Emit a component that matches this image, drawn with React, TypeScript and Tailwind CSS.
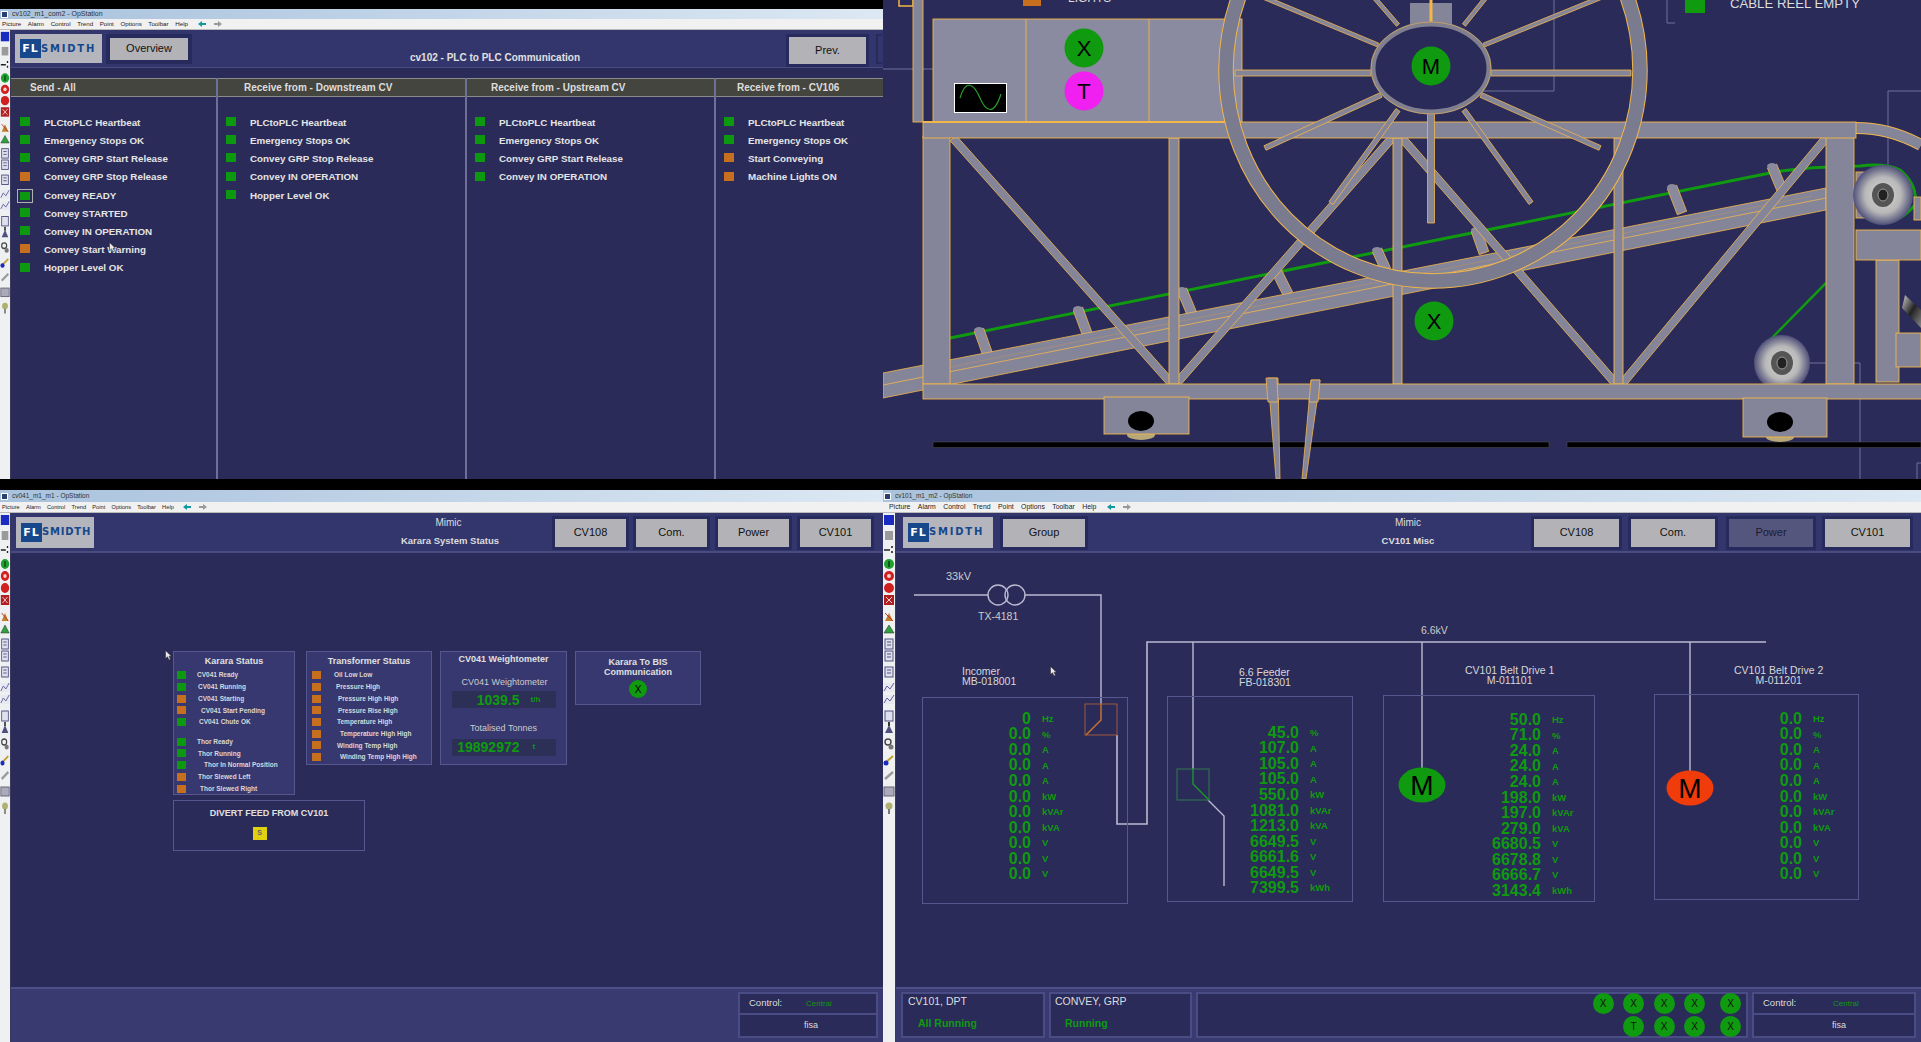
import React from "react";

const GRAY = "#85859a";
const ORG = "#f2b64a";
const GREEN = "#0f9a10";

function Bar({ a, b, w = 8, fill = GRAY }: { a: [number, number]; b: [number, number]; w?: number; fill?: string }) {
  const dx = b[0] - a[0];
  const dy = b[1] - a[1];
  const l = Math.hypot(dx, dy) || 1;
  const nx = (-dy / l) * (w / 2);
  const ny = (dx / l) * (w / 2);
  const p = `${a[0] + nx},${a[1] + ny} ${b[0] + nx},${b[1] + ny} ${b[0] - nx},${b[1] - ny} ${a[0] - nx},${a[1] - ny}`;
  return <polygon points={p} fill={fill} stroke={ORG} strokeWidth="0.8" />;
}

function Rect({ x, y, w, h, fill = GRAY }: { x: number; y: number; w: number; h: number; fill?: string }) {
  return <rect x={x} y={y} width={w} height={h} fill={fill} stroke={ORG} strokeWidth="0.9" />;
}

function Cursor({ cls }: { cls: string }) {
  return (
    <svg viewBox="0 0 7 11" className={`absolute w-[7px] h-[11px] ${cls}`}>
      <path d="M0.5 0.5V8.5L2.5 6.8L4 10L5.5 9.3L4 6.2H6.5Z" fill="#e8e8e8" stroke="#222" strokeWidth=".5" />
    </svg>
  );
}

function Toolbar({ h, wide }: { h: "tall" | "short"; wide?: boolean }) {
  return (
    <div className={`shrink-0 bg-[#eef0f2] border-r border-[#3a3a60] ${wide ? "w-[13px]" : "w-[11px]"}`}>
      <svg viewBox="0 0 12 310" preserveAspectRatio="none" className={h === "tall" ? "w-full h-[310px]" : "w-full h-[292px]"}>
        <rect x="1" y="2" width="10" height="10" fill="#1a2bc0" />
        <rect x="2" y="18" width="8" height="9" fill="#9a9a9a" />
        <path d="M1 37h6M9 33v2M9 38v2" stroke="#222" strokeWidth="1.6" />
        <circle cx="6" cy="51" r="5" fill="#20a030" /><rect x="5" y="48" width="2" height="6" fill="#0b5a12" />
        <circle cx="6" cy="63" r="5" fill="#d02020" /><circle cx="6" cy="63" r="2" fill="#f5d0d0" />
        <circle cx="6" cy="75" r="5" fill="#d02020" />
        <rect x="1" y="82" width="10" height="10" fill="#b02020" /><path d="M3 84l6 6M9 84l-6 6" stroke="#f0d0d0" />
        <path d="M2 108l4-8 4 8z" fill="#c08030" /><path d="M2 100l8 8" stroke="#c03020" />
        <path d="M1 120l5-8 5 8z" fill="#30a040" stroke="#222" strokeWidth=".5" />
        {[126, 138, 154].map((y) => (
          <g key={y}>
            <rect x="2" y={y} width="8" height="10" fill="#dfe0ee" stroke="#505080" />
            <path d={`M4 ${y + 3}h4M4 ${y + 6}h4`} stroke="#505080" />
          </g>
        ))}
        {[170, 182].map((y) => (
          <g key={y}>
            <rect x="1" y={y} width="10" height="9" fill="#e8e8f0" />
            <path d={`M1 ${y + 8}l3-5 3 3 4-6`} fill="none" stroke="#6060a0" />
          </g>
        ))}
        <rect x="2" y="198" width="8" height="10" fill="#dfe0ee" stroke="#505080" />
        <path d="M6 212l4 8H2z" fill="#505080" /><rect x="5" y="209" width="2" height="4" fill="#333" />
        <circle cx="5" cy="229" r="3" fill="none" stroke="#444" strokeWidth="1.4" /><circle cx="8" cy="234" r="2.5" fill="#777" />
        <path d="M2 250l8-7" stroke="#c0a030" strokeWidth="2" /><circle cx="3" cy="250" r="2.5" fill="#1a2bc0" />
        <path d="M2 266l8-7" stroke="#999" strokeWidth="2.4" />
        <rect x="1" y="274" width="10" height="9" fill="#aab" stroke="#667" />
        <circle cx="6" cy="293" r="3.5" fill="#b0b070" /><rect x="5" y="296" width="2" height="5" fill="#777" />
      </svg>
    </div>
  );
}

function TitleMenu({ title, size }: { title: string; size: "a" | "b" | "c" }) {
  const items = ["Picture", "Alarm", "Control", "Trend", "Point", "Options", "Toolbar", "Help"];
  const menu = size === "a" ? "text-[6.2px] gap-[6.6px] pl-[2px]" : size === "b" ? "text-[5.7px] gap-[6.2px] pl-[2px]" : "text-[6.9px] gap-[7.4px] pl-[6px]";
  return (
    <>
      <div className={`flex items-center gap-[4px] pl-[1px] bg-gradient-to-r from-[#a9c2dd] to-[#dce8f3] text-[#333] ${size === "a" ? "h-[10px] text-[7px]" : "h-[12px] text-[6.5px]"}`}>
        <span className="w-[7px] h-[7px] bg-[#2b3f73] border border-white" />
        <span>{title}</span>
      </div>
      <div className={`flex items-center bg-[#f1f1f1] text-[#222] border-b border-[#bbb] h-[11px] ${menu}`}>
        {items.map((m) => (
          <span key={m}>{m}</span>
        ))}
        <svg width="26" height="8" viewBox="0 0 26 8" className="ml-[2px]">
          <path d="M1 4l4-3v2h4v2H5v2z" fill="#109aa0" />
          <path d="M25 4l-4-3v2h-4v2h4v2z" fill="#999" />
        </svg>
      </div>
    </>
  );
}

function Logo({ cls, tight }: { cls: string; tight?: boolean }) {
  return (
    <div className={`bg-[#b4b5bd] flex items-center pl-[5px] shrink-0 font-['DejaVu_Sans',sans-serif] font-bold ${cls}`}>
      <div className="h-[19px] w-[21px] bg-[#17488c] flex items-center justify-center text-[11px] tracking-[1px] text-white leading-none">FL</div>
      <span className={`text-[10px] text-[#17488c] leading-none ${tight ? "tracking-[0.8px]" : "tracking-[1.8px]"}`}>SMIDTH</span>
    </div>
  );
}

function Btn({ label, cls, dark }: { label: string; cls: string; dark?: boolean }) {
  return (
    <div className={`border-[#272a5c] flex items-center justify-center text-[11px] ${dark ? "bg-[#55567e] text-[#1c1c30]" : "bg-[#b3b3b7] text-[#111]"} ${cls}`}>
      {label}
    </div>
  );
}

function Ind({ c, cls }: { c: "g" | "o"; cls: string }) {
  return <div className={`shrink-0 ${c === "g" ? "bg-[#0c980f]" : "bg-[#c6701f]"} ${cls}`} />;
}

function Com({ head, rows, hcls, pcls }: { head: string; rows: [string, "g" | "o"][]; hcls: string; pcls: string }) {
  return (
    <div className="border-r-2 border-[#6f7098] last:border-r-0 flex flex-col">
      <div className={`h-[19px] bg-[#45453f] border-y border-[#8a8a8a] flex items-center text-[10px] font-bold text-[#ddd] ${hcls}`}>{head}</div>
      <div className={`pt-[17px] ${pcls}`}>
        {rows.map(([t, c], i) => (
          <div key={t + i} className="flex items-center h-[18.2px]">
            {t === "Convey READY" ? (
              <div className="-ml-[3px] mr-[11px] border border-[#b0b0b0] p-[2px]">
                <Ind c={c} cls="w-[10px] h-[8px]" />
              </div>
            ) : (
              <Ind c={c} cls="w-[10px] h-[9px] mr-[14px] -mt-[3px]" />
            )}
            <span className="text-[9.8px] font-bold text-[#e4e4e4] whitespace-nowrap">{t}</span>
          </div>
        ))}
      </div>
    </div>
  );
}

function TopLeft() {
  const c1: [string, "g" | "o"][] = [["PLCtoPLC Heartbeat", "g"], ["Emergency Stops OK", "g"], ["Convey GRP Start Release", "g"], ["Convey GRP Stop Release", "o"], ["Convey READY", "g"], ["Convey STARTED", "g"], ["Convey IN OPERATION", "g"], ["Convey Start Warning", "o"], ["Hopper Level OK", "g"]];
  const c2: [string, "g" | "o"][] = [["PLCtoPLC Heartbeat", "g"], ["Emergency Stops OK", "g"], ["Convey GRP Stop Release", "g"], ["Convey IN OPERATION", "g"], ["Hopper Level OK", "g"]];
  const c3: [string, "g" | "o"][] = [["PLCtoPLC Heartbeat", "g"], ["Emergency Stops OK", "g"], ["Convey GRP Start Release", "g"], ["Convey IN OPERATION", "g"]];
  const c4: [string, "g" | "o"][] = [["PLCtoPLC Heartbeat", "g"], ["Emergency Stops OK", "g"], ["Start Conveying", "o"], ["Machine Lights ON", "o"]];
  return (
    <div className="flex flex-col h-full pt-[9px] bg-black overflow-hidden">
      <TitleMenu title="cv102_m1_com2 - OpStation" size="a" />
      <div className="flex flex-1 min-h-0">
        <Toolbar h="short" />
        <div className="flex-1 min-w-0 flex flex-col bg-[#2a2b58]">
          <div className="h-[38px] bg-[#33366c] border-b border-[#4a4c80] flex items-center pl-[4px]">
            <Logo cls="w-[87px] h-[29px]" />
            <Btn label="Overview" cls="w-[86px] h-[30px] ml-[4px] border-4" />
            <div className="w-[400px] ml-[103px] pt-[17px] text-center text-[10px] font-bold text-[#e0e0e0]">cv102 - PLC to PLC Communication</div>
            <Btn label="Prev." cls="w-[83px] h-[33px] ml-[91px] mt-[3px] border-[3px]" />
            <div className="w-[6px] h-[30px] ml-[7px] border-l-2 border-y-2 border-[#272a5c]" />
          </div>
          <div className="h-[10px]" />
          <div className="flex-1 grid grid-cols-[207px_249px_249px_1fr]">
            <Com head="Send - All" rows={c1} hcls="pl-[19px]" pcls="pl-[9px]" />
            <Com head="Receive from - Downstream CV" rows={c2} hcls="pl-[26px]" pcls="pl-[8px]" />
            <Com head="Receive from - Upstream CV" rows={c3} hcls="pl-[24px]" pcls="pl-[8px]" />
            <Com head="Receive from - CV106" rows={c4} hcls="pl-[21px]" pcls="pl-[8px]" />
          </div>
        </div>
      </div>
    </div>
  );
}

function TopRight() {
  return (
    <div className="relative h-full bg-[#2a2b58] overflow-hidden">
      <svg viewBox="883 0 1038 479" className="w-full h-full">
        <defs>
          <radialGradient id="pul">
            <stop offset="0" stopColor="#d8d8d8" />
            <stop offset="0.6" stopColor="#b8b8b8" />
            <stop offset="1" stopColor="#50507a" />
          </radialGradient>
          <linearGradient id="cyl" x1="0" y1="0" x2="1" y2="1">
            <stop offset="0" stopColor="#ccc" />
            <stop offset="0.5" stopColor="#222" />
            <stop offset="1" stopColor="#888" />
          </linearGradient>
        </defs>
        {/* thin leader lines */}
        <g fill="none" stroke="#6f7098" strokeWidth="1">
          <path d="M1554 0V91H1452" />
          <path d="M1667 0V23H1675" />
          <path d="M883 69H933" />
          <path d="M1888 166V91H1921" />
          <path d="M1808 363H1860V479" />
          <path d="M1921 463H1917V479" />
        </g>
        <rect x="899" y="-2" width="14" height="8" fill="none" stroke={ORG} strokeWidth="1.5" />
        {/* rails + wheels */}
        <rect x="933" y="442" width="616" height="5.5" fill="#000" stroke="#555" strokeWidth=".5" />
        <rect x="1567" y="442" width="354" height="5.5" fill="#000" stroke="#555" strokeWidth=".5" />
        <ellipse cx="1141" cy="435" rx="14" ry="5" fill="#b8a878" />
        <ellipse cx="1780" cy="437" rx="14" ry="5" fill="#b8a878" />
        {/* legs */}
        <polygon points="1268,378 1278,378 1280,479 1276,479" fill={GRAY} stroke={ORG} strokeWidth=".8" />
        <polygon points="1311,380 1320,380 1306,479 1302,479" fill={GRAY} stroke={ORG} strokeWidth=".8" />
        {/* green belt */}
        <path d="M950 338L1770 173Q1800 167 1860 166Q1885 163 1900 170Q1918 185 1915 205Q1900 222 1885 222" fill="none" stroke={GREEN} strokeWidth="3" />
        <path d="M1826 283L1760 350Q1748 365 1770 383" fill="none" stroke={GREEN} strokeWidth="2.5" />
        {/* idlers */}
        {[[979, 330, 989, 358], [1078, 309, 1088, 336], [1182, 290, 1192, 314], [1277, 272, 1288, 294], [1377, 250, 1386, 270], [1476, 230, 1484, 253], [1672, 187, 1682, 213], [1772, 166, 1782, 190]].map(([a, b, c, d], i) => (
          <g key={i}>
            <Bar a={[a, b]} b={[c, d]} w={10} fill="#8a8a9c" />
            <ellipse cx={a} cy={b} rx="5" ry="3" fill="#8a8a9c" />
          </g>
        ))}
        {/* conveyor */}
        <polygon points="883,373 1826,188 1826,210 883,398" fill={GRAY} stroke={ORG} strokeWidth=".8" />
        <path d="M883 385L1826 198" stroke={ORG} strokeWidth=".8" />
        <path d="M950 367L1812 196" stroke="#aa9070" strokeWidth=".7" />
        {/* frame diagonals */}
        <Bar a={[953, 138]} b={[1172, 384]} w={8} />
        <Bar a={[1176, 384]} b={[1392, 138]} w={8} />
        <Bar a={[1402, 138]} b={[1616, 384]} w={8} />
        <Bar a={[1622, 384]} b={[1826, 138]} w={8} />
        {/* frame verticals */}
        <Rect x={923} y={136} w={27} h={248} />
        <Rect x={1169} y={138} w={10} h={246} />
        <Rect x={1393} y={138} w={9} h={246} />
        <Rect x={1614} y={138} w={9} h={246} />
        <Rect x={1826} y={137} w={28} h={247} />
        {/* right side details */}
        <Rect x={1876} y={260} w={23} h={122} />
        <Rect x={1856} y={230} w={65} h={30} />
        <Rect x={1896} y={333} w={25} h={34} />
        <polygon points="1905,295 1921,310 1921,328 1902,308" fill="url(#cyl)" />
        <path d="M1856 128Q1890 128 1921 145" fill="none" stroke={ORG} strokeWidth="12" />
        <path d="M1856 128Q1890 128 1921 145" fill="none" stroke={GRAY} strokeWidth="10" />
        <Rect x={1856} y={172} w={13} h={46} />
        <Rect x={1914} y={197} w={7} h={23} />
        <ellipse cx="1883" cy="195" rx="30" ry="30" fill="url(#pul)" />
        <ellipse cx="1883" cy="195" rx="11" ry="12" fill="#555" />
        <ellipse cx="1883" cy="195" rx="5" ry="6" fill="#222" stroke="#999" />
        <ellipse cx="1782" cy="363" rx="28" ry="28" fill="url(#pul)" />
        <ellipse cx="1782" cy="363" rx="11" ry="12" fill="#555" />
        <ellipse cx="1782" cy="363" rx="5" ry="6" fill="#222" stroke="#999" />
        {/* left column, control panel */}
        <Rect x={913} y={-2} w={10} h={124} />
        <Rect x={933} y={19} w={309} h={103} fill="#8a8aa0" />
        <path d="M1026 19V122M1149 19V122" stroke={ORG} strokeWidth=".9" />
        <Rect x={923} y={122} w={933} h={16} />
        <path d="M923 122H1240" stroke={ORG} strokeWidth="2" />
        <Rect x={923} y={384} w={1000} h={15} />
        {/* feet */}
        <Rect x={1104} y={397} w={85} h={37} />
        <Rect x={1743} y={398} w={84} h={39} />
        <ellipse cx="1141" cy="421" rx="13" ry="10" fill="#000" />
        <ellipse cx="1780" cy="422" rx="13" ry="10" fill="#000" />
        <polygon points="1266,378 1277,378 1278,402 1268,402" fill={GRAY} stroke={ORG} strokeWidth=".8" />
        <polygon points="1311,380 1320,380 1318,402 1309,402" fill={GRAY} stroke={ORG} strokeWidth=".8" />
        {/* wheel */}
        <ellipse cx="1433" cy="70" rx="207" ry="211" fill="none" stroke={ORG} strokeWidth="15.5" />
        <ellipse cx="1433" cy="70" rx="207" ry="211" fill="none" stroke="#7b7b90" strokeWidth="13.5" />
        {/* spokes */}
        <Bar a={[1371, 73]} b={[1235, 73]} w={6} />
        <Bar a={[1491, 73]} b={[1631, 73]} w={6} />
        <Bar a={[1381, 95]} b={[1265, 148]} w={5} />
        <Bar a={[1481, 95]} b={[1600, 148]} w={5} />
        <Bar a={[1464, 110]} b={[1531, 203]} w={5} />
        <Bar a={[1398, 110]} b={[1331, 203]} w={5} />
        <Bar a={[1431, 110]} b={[1431, 223]} w={7} />
        <Bar a={[1378, 45]} b={[1258, -5]} w={4} />
        <Bar a={[1484, 45]} b={[1607, -5]} w={4} />
        <Bar a={[1398, 25]} b={[1372, -5]} w={4} />
        <Bar a={[1464, 25]} b={[1488, -5]} w={4} />
        <rect x="1410" y="3" width="42" height="22" fill={GRAY} />
        <path d="M1431 0V23" stroke={ORG} strokeWidth="3" />
        <ellipse cx="1431" cy="68" rx="58" ry="44" fill="#2a2b58" stroke="#7f7f90" strokeWidth="5" />
        <ellipse cx="1431" cy="68" rx="60" ry="46" fill="none" stroke={ORG} strokeWidth=".6" />
        {/* scope */}
        <rect x="954.5" y="83.5" width="52" height="29" fill="#000" stroke="#fff" strokeWidth="1" />
        <path d="M960 98C966 78 974 84 980 98S994 116 1001 94" fill="none" stroke="#2a9a2a" strokeWidth="1.2" />
        {/* lights */}
        <circle cx="1084" cy="48" r="19.5" fill={GREEN} />
        <circle cx="1084" cy="91" r="19.5" fill="#f020f0" />
        <circle cx="1431" cy="66" r="19.5" fill={GREEN} />
        <circle cx="1434" cy="321" r="19.5" fill={GREEN} />
        <g fontFamily="'Liberation Sans', sans-serif" fontSize="22" textAnchor="middle" fill="#000">
          <text x="1084" y="56">X</text>
          <text x="1084" y="99">T</text>
          <text x="1431" y="74">M</text>
          <text x="1434" y="329">X</text>
        </g>
        {/* legend */}
        <rect x="1023" y="0" width="18" height="6" fill="#c6701f" />
        <rect x="1685" y="0" width="20" height="13" fill={GREEN} />
        <text x="1068" y="2" fontFamily="'Liberation Sans', sans-serif" fontSize="12" fill="#ddd">LIGHTS</text>
        <text x="1730" y="8" fontFamily="'Liberation Sans', sans-serif" fontSize="13.2" fill="#ddd">CABLE REEL EMPTY</text>
      </svg>
    </div>
  );
}

function Footer({ children, ctrl }: { children?: React.ReactNode; ctrl: "narrow" | "wide" }) {
  return (
    <div className="h-[55px] mt-auto bg-[#393b70] border-t-2 border-[#4d4f88] flex items-stretch pt-[3px] pb-[4px] pr-[5px] pl-[5px] gap-[4px] shrink-0">
      {children}
      <div className={`ml-auto border-2 border-[#4a4c85] bg-[#2a2b58] flex flex-col shrink-0 ${ctrl === "wide" ? "w-[164px]" : "w-[140px]"}`}>
        <div className="h-[21px] border-b-2 border-[#4a4c85] flex items-center pl-[9px] text-[9.5px] text-[#ddd]">
          <span className={ctrl === "wide" ? "w-[70px]" : "w-[57px]"}>Control:</span>
          <span className="text-[8px] text-[#0f9a10]">Central</span>
        </div>
        <div className={`flex-1 flex items-center justify-center text-[9px] text-[#ddd] ${ctrl === "wide" ? "pl-[10px]" : "pl-[6px]"}`}>fisa</div>
      </div>
    </div>
  );
}

function Panel({ cls, children }: { cls: string; children: React.ReactNode }) {
  return <div className={`bg-[#36386f] border border-[#55578e] shrink-0 ${cls}`}>{children}</div>;
}

function BottomLeft() {
  const k: [string, "g" | "o", string][] = [
    ["CV041 Ready", "g", "pl-[11px]"], ["CV041 Running", "g", "pl-[12px]"], ["CV041 Starting", "o", "pl-[12px]"], ["CV041 Start Pending", "o", "pl-[15px]"], ["CV041 Chute OK", "g", "pl-[13px]"],
    ["", "g", ""], ["Thor Ready", "g", "pl-[11px]"], ["Thor Running", "g", "pl-[12px]"], ["Thor In Normal Position", "g", "pl-[18px]"], ["Thor Slewed Left", "o", "pl-[12px]"], ["Thor Slewed Right", "o", "pl-[14px]"],
  ];
  const t: [string, string][] = [
    ["Oil Low Low", "pl-[13px]"], ["Pressure High", "pl-[15px]"], ["Pressure High High", "pl-[17px]"], ["Pressure Rise High", "pl-[17px]"], ["Temperature High", "pl-[16px]"], ["Temperature High High", "pl-[19px]"], ["Winding Temp High", "pl-[16px]"], ["Winding Temp High High", "pl-[19px]"],
  ];
  return (
    <div className="flex flex-col h-full pt-[11px] bg-black overflow-hidden">
      <TitleMenu title="cv041_m1_m1 - OpStation" size="b" />
      <div className="flex flex-1 min-h-0">
        <Toolbar h="tall" />
        <div className="flex-1 min-w-0 flex flex-col bg-[#2a2b58]">
          <div className="h-[40px] bg-[#33366c] border-b-2 border-[#4a4c80] flex items-center pl-[5px] shrink-0">
            <Logo cls="w-[78px] h-[31px]" tight />
            <div className="w-[200px] ml-[256px] text-center text-[#ddd] leading-none">
              <div className="text-[10px] pr-[3px]">Mimic</div>
              <div className="text-[9.5px] font-bold mt-[8px]">Karara System Status</div>
            </div>
            <Btn label="CV108" cls="w-[77px] h-[34px] ml-[2px] mt-[1px] border-[3px]" />
            <Btn label="Com." cls="w-[77px] h-[34px] ml-[4px] mt-[1px] border-[3px]" />
            <Btn label="Power" cls="w-[77px] h-[34px] ml-[5px] mt-[1px] border-[3px]" />
            <Btn label="CV101" cls="w-[77px] h-[34px] ml-[5px] mt-[1px] border-[3px]" />
          </div>
          <div className="pl-[162px] pt-[98px]">
            <div className="flex items-start">
              <Panel cls="w-[122px] h-[144px]">
                <div className="text-center text-[9px] font-bold text-[#e0e0e0] mt-[3px] mb-[1px]">Karara Status</div>
                {k.map(([n, c, p], i) => (
                  <div key={i} className={`flex items-center pl-[3px] ${n ? "h-[11.7px]" : "h-[8px]"}`}>
                    {n && <Ind c={c} cls="w-[9px] h-[8px]" />}
                    <span className={`text-[6.5px] font-bold text-[#d8d8d8] whitespace-nowrap ${p}`}>{n}</span>
                  </div>
                ))}
              </Panel>
              <Panel cls="w-[126px] h-[114px] ml-[11px]">
                <div className="text-center text-[9px] font-bold text-[#e0e0e0] mt-[3px] mb-[1px]">Transformer Status</div>
                {t.map(([n, p]) => (
                  <div key={n} className="flex items-center pl-[5px] h-[11.7px]">
                    <Ind c="o" cls="w-[9px] h-[8px]" />
                    <span className={`text-[6.5px] font-bold text-[#d8d8d8] whitespace-nowrap ${p}`}>{n}</span>
                  </div>
                ))}
              </Panel>
              <Panel cls="w-[127px] h-[114px] ml-[8px] flex flex-col items-center">
                <div className="text-[9px] font-bold text-[#e0e0e0] mt-[1px]">CV041 Weightometer</div>
                <div className="text-[9px] text-[#ccc] mt-[9px] pl-[2px]">CV041 Weightometer</div>
                <div className="w-[104px] h-[17px] mt-[2px] bg-[#2c3056] flex items-center">
                  <span className="w-[68px] text-right text-[14px] font-bold text-[#0f9a10] leading-none">1039.5</span>
                  <span className="text-[8px] font-bold text-[#0f9a10] ml-[11px]">t/h</span>
                </div>
                <div className="text-[9px] text-[#ccc] mt-[14px]">Totalised Tonnes</div>
                <div className="w-[104px] h-[17px] mt-[3px] bg-[#2c3056] flex items-center">
                  <span className="w-[68px] text-right text-[14px] font-bold text-[#0f9a10] leading-none">19892972</span>
                  <span className="text-[8px] font-bold text-[#0f9a10] ml-[13px]">t</span>
                </div>
              </Panel>
              <Panel cls="w-[126px] h-[54px] ml-[8px] flex flex-col items-center">
                <div className="text-center text-[9px] font-bold text-[#e0e0e0] leading-[10px] mt-[5px]">Karara To BIS<br />Communication</div>
                <div className="w-[18px] h-[18px] mt-[3px] rounded-full bg-[#0f9a10] flex items-center justify-center text-[10px] text-black">X</div>
              </Panel>
            </div>
            <div className="w-[192px] h-[51px] mt-[5px] border border-[#55578e] flex flex-col items-center">
              <div className="text-[9px] font-bold text-[#e0e0e0] mt-[6px]">DIVERT FEED FROM CV101</div>
              <div className="w-[14px] h-[13px] mt-[6px] -ml-[19px] bg-[#e0d010] flex items-center justify-center text-[7px] font-bold text-[#666]">S</div>
            </div>
          </div>
          <Footer ctrl="narrow" />
        </div>
      </div>
    </div>
  );
}

function Vals({ cls, rows }: { cls: string; rows: [string, string][] }) {
  return (
    <div className={`absolute text-[#0f9a10] ${cls}`}>
      {rows.map(([v, u], i) => (
        <div key={i} className="flex items-center h-[15.55px]">
          <span className="w-[60px] text-right text-[16px] font-bold leading-none">{v}</span>
          <span className="ml-[11px] text-[9.5px] font-bold leading-none">{u}</span>
        </div>
      ))}
    </div>
  );
}

const U = ["Hz", "%", "A", "A", "A", "kW", "kVAr", "kVA", "V", "V", "V"];
const zeros: [string, string][] = U.map((u, i) => [i === 0 ? "0" : "0.0", u]);
const zeros2: [string, string][] = U.map((u) => ["0.0", u]);
const feeder: [string, string][] = [["45.0", "%"], ["107.0", "A"], ["105.0", "A"], ["105.0", "A"], ["550.0", "kW"], ["1081.0", "kVAr"], ["1213.0", "kVA"], ["6649.5", "V"], ["6661.6", "V"], ["6649.5", "V"], ["7399.5", "kWh"]];
const belt1: [string, string][] = [["50.0", "Hz"], ["71.0", "%"], ["24.0", "A"], ["24.0", "A"], ["24.0", "A"], ["198.0", "kW"], ["197.0", "kVAr"], ["279.0", "kVA"], ["6680.5", "V"], ["6678.8", "V"], ["6666.7", "V"], ["3143.4", "kWh"]];

function Label({ cls, children }: { cls: string; children: React.ReactNode }) {
  return <div className={`absolute text-[10.5px] leading-[10px] text-[#d8d8d8] whitespace-nowrap ${cls}`}>{children}</div>;
}

function BottomRight() {
  const box = "absolute border border-[#55578e]";
  return (
    <div className="flex flex-col h-full pt-[11px] bg-black overflow-hidden">
      <TitleMenu title="cv101_m1_m2 - OpStation" size="c" />
      <div className="flex flex-1 min-h-0">
        <Toolbar h="tall" wide />
        <div className="flex-1 min-w-0 flex flex-col bg-[#2a2b58]">
          <div className="h-[40px] bg-[#33366c] border-b-2 border-[#4a4c80] flex items-center pl-[7px] shrink-0">
            <Logo cls="w-[90px] h-[31px]" />
            <Btn label="Group" cls="w-[88px] h-[34px] ml-[7px] mt-[1px] border-[3px]" />
            <div className="w-[200px] ml-[220px] text-center text-[#ddd] leading-none">
              <div className="text-[10px]">Mimic</div>
              <div className="text-[9.5px] font-bold mt-[8px]">CV101 Misc</div>
            </div>
            <Btn label="CV108" cls="w-[91px] h-[34px] ml-[23px] mt-[1px] border-[3px]" />
            <Btn label="Com." cls="w-[90px] h-[34px] ml-[6px] mt-[1px] border-[3px]" />
            <Btn label="Power" cls="w-[90px] h-[34px] ml-[8px] mt-[1px] border-[3px]" dark />
            <Btn label="CV101" cls="w-[91px] h-[34px] ml-[6px] mt-[1px] border-[3px]" />
          </div>
          <div className="relative flex-1 min-h-0">
            <svg viewBox="896 553 1025 434" className="absolute inset-0 w-full h-full">
              <g fill="none" stroke="#b9bbd2" strokeWidth="1.4">
                <path d="M914 595H988M1025 595H1101V704" />
                <circle cx="998" cy="595" r="10" />
                <circle cx="1015" cy="595" r="10" />
                <path d="M1117 735V824H1147V642H1766" strokeWidth="1.6" />
                <path d="M1193 642V769M1208 800L1224 816V886M1422 642V768M1690 642V771" />
              </g>
              <rect x="1085" y="704" width="32" height="31" fill="none" stroke="#a0583a" strokeWidth="1" />
              <path d="M1101 704V720L1086 735" fill="none" stroke="#c8702f" strokeWidth="1.5" />
              <rect x="1177" y="769" width="32" height="31" fill="none" stroke="#2f7a4a" strokeWidth="1" />
              <path d="M1193 769V784L1209 800" fill="none" stroke="#1d9030" strokeWidth="1.5" />
              <ellipse cx="1422" cy="785" rx="23.5" ry="17.5" fill={GREEN} />
              <ellipse cx="1690" cy="788" rx="23.5" ry="17.5" fill="#f03c0a" />
              <g fontFamily="'Liberation Sans', sans-serif" fontSize="28" textAnchor="middle" fill="#000">
                <text x="1422" y="795">M</text>
                <text x="1690" y="798">M</text>
              </g>
            </svg>

            <div className="absolute left-[50px] top-[15px] text-[11px] text-[#ccc]">33kV</div>
            <div className="absolute left-[82px] top-[56px] text-[10.5px] text-[#ccc]">TX-4181</div>
            <div className="absolute left-[525px] top-[70px] text-[10.5px] text-[#ccc]">6.6kV</div>

            <Label cls="left-[66px] top-[113px]"><div>Incomer</div><div>MB-018001</div></Label>
            <Label cls="left-[343px] top-[114px]"><div>6.6 Feeder</div><div>FB-018301</div></Label>
            <Label cls="left-[569px] top-[112px] text-center"><div>CV101 Belt Drive 1</div><div>M-011101</div></Label>
            <Label cls="left-[838px] top-[112px] text-center"><div>CV101 Belt Drive 2</div><div>M-011201</div></Label>

            <div className={`${box} left-[26px] top-[144px] w-[206px] h-[207px]`} />
            <div className={`${box} left-[271px] top-[143px] w-[186px] h-[206px]`} />
            <div className={`${box} left-[487px] top-[142px] w-[212px] h-[207px]`} />
            <div className={`${box} left-[758px] top-[141px] w-[205px] h-[206px]`} />

            <Vals cls="left-[75px] top-[158px]" rows={zeros} />
            <Vals cls="left-[343px] top-[172px]" rows={feeder} />
            <Vals cls="left-[585px] top-[159px]" rows={belt1} />
            <Vals cls="left-[846px] top-[158px]" rows={zeros2} />
          </div>
          <Footer ctrl="wide">
            <div className="w-[144px] border-2 border-[#4a4c85] bg-[#2a2b58] flex flex-col pl-[5px] text-[10.5px] text-[#ddd]">
              <div className="mt-[0px]">CV101, DPT</div>
              <div className="mt-[6px] pl-[10px] text-[10.5px] font-bold text-[#0f9a10]">All Running</div>
            </div>
            <div className="w-[143px] border-2 border-[#4a4c85] bg-[#2a2b58] flex flex-col pl-[4px] text-[10.5px] text-[#ddd]">
              <div className="mt-[0px]">CONVEY, GRP</div>
              <div className="mt-[6px] pl-[10px] text-[10.5px] font-bold text-[#0f9a10]">Running</div>
            </div>
            <div className="flex-1 border-2 border-[#4a4c85] bg-[#2a2b58] flex flex-col items-end justify-center gap-[2px] pr-[5px]">
              {[["X", "X", "X", "X", "X"], ["T", "X", "X", "X"]].map((r, i) => (
                <div key={i} className="flex">
                  {r.map((c, j) => (
                    <div key={j} className={`w-[21px] h-[21px] rounded-full bg-[#0f9a10] flex items-center justify-center text-[10px] text-[#111] ${j === r.length - 1 ? "ml-[15px]" : j === 0 ? "" : "ml-[9.5px]"}`}>{c}</div>
                  ))}
                </div>
              ))}
            </div>
          </Footer>
        </div>
      </div>
    </div>
  );
}

export default function App() {
  return (
    <div className="relative w-[1921px] h-[1042px] overflow-hidden bg-black font-['Liberation_Sans',Arial,sans-serif] grid grid-cols-[883px_1038px] grid-rows-[479px_563px]">
      <TopLeft />
      <TopRight />
      <BottomLeft />
      <BottomRight />
      <Cursor cls="left-[109px] top-[242px]" />
      <Cursor cls="left-[165px] top-[650px]" />
      <Cursor cls="left-[1050px] top-[666px]" />
    </div>
  );
}
